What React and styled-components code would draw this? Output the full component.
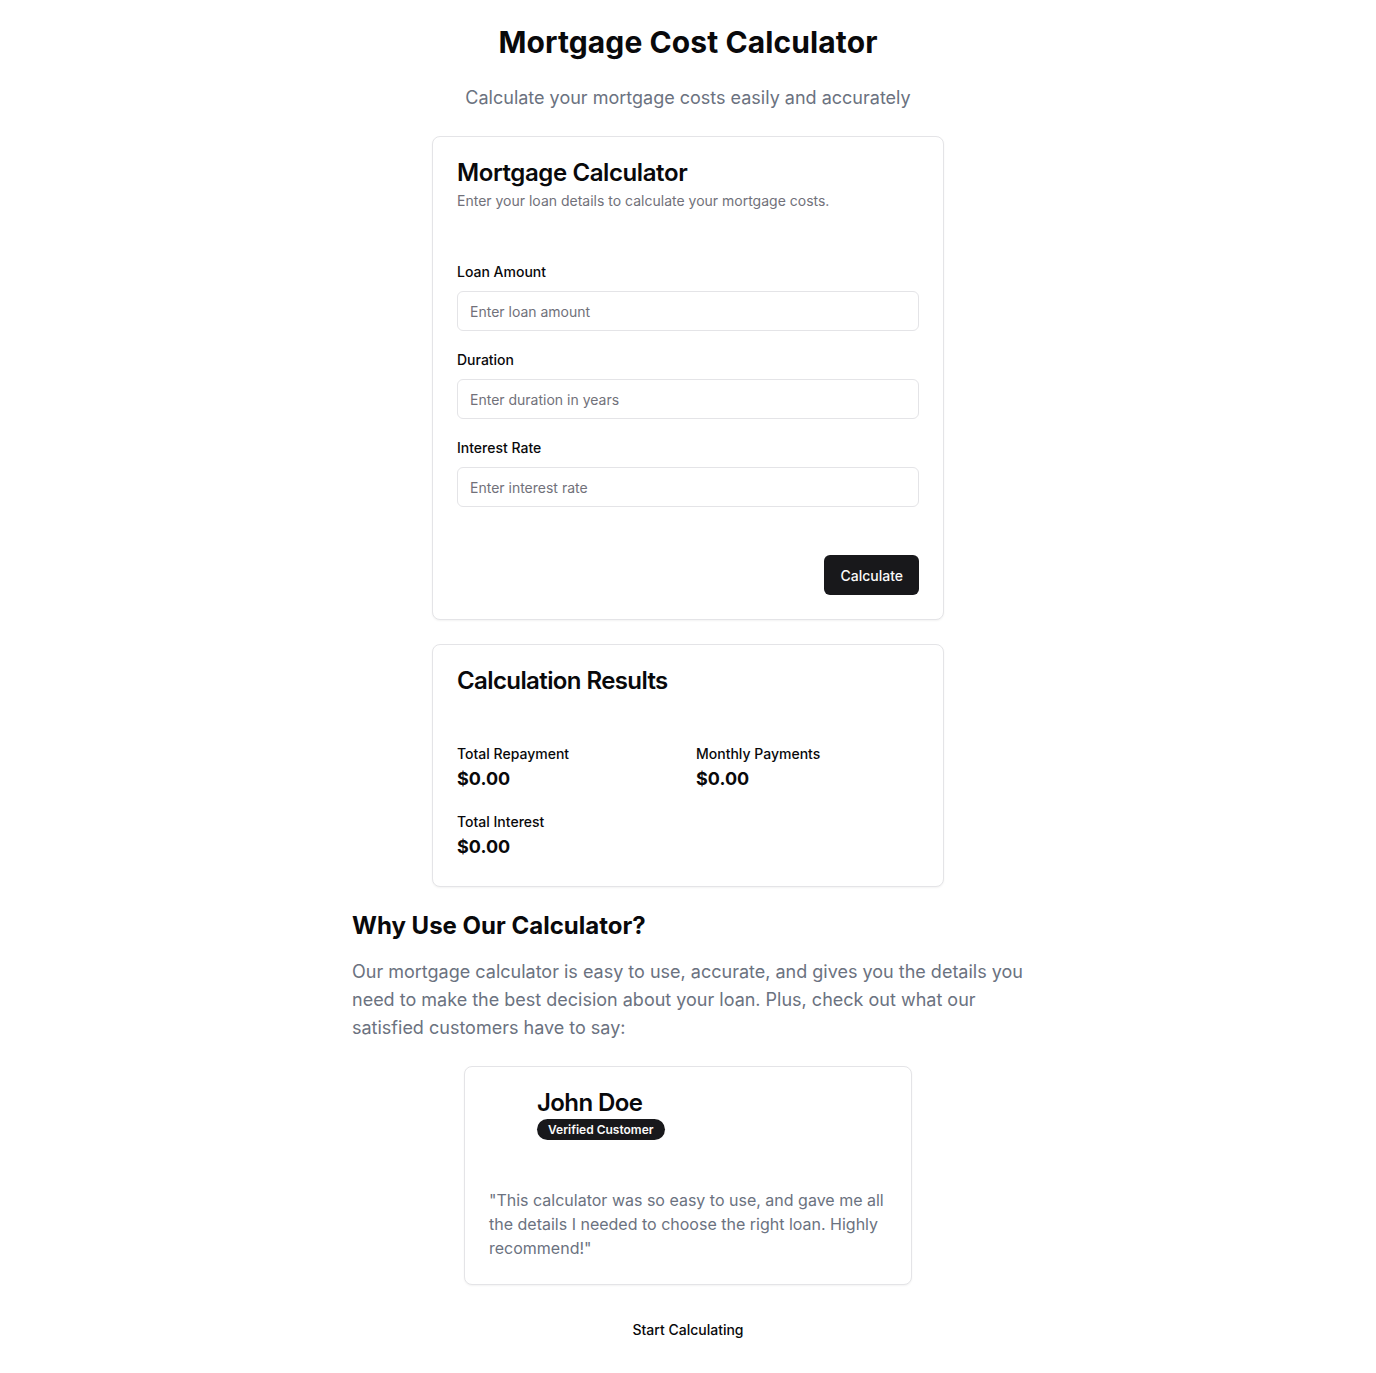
import React from 'react';
import styled, { createGlobalStyle } from 'styled-components';

const GlobalStyle = createGlobalStyle`
  * { box-sizing: border-box; }
  body {
    margin: 0;
    background: #ffffff;
    font-family: 'Inter', 'Liberation Sans', sans-serif;
    color: #09090b;
  }
`;

const Page = styled.div`
  display: flex;
  flex-direction: column;
  align-items: center;
  padding: 24px 16px 24px;
`;

const Title = styled.h1`
  margin: 0;
  font-size: 30px;
  line-height: 36px;
  font-weight: 700;
  letter-spacing: 0.1px;
`;

const Subtitle = styled.p`
  margin: 24px 0 24px;
  font-size: 18px;
  line-height: 28px;
  color: #6b7280;
`;

const Card = styled.div`
  width: ${(p) => p.$width}px;
  border: 1px solid #e4e4e7;
  border-radius: 8px;
  background: #fff;
  box-shadow: 0 1px 2px rgba(0, 0, 0, 0.05);
  margin-bottom: 24px;
`;

const CardHeader = styled.div`
  display: flex;
  flex-direction: column;
  gap: 6px;
  padding: 24px;
`;

const CardTitle = styled.h3`
  margin: 0;
  font-size: 24px;
  line-height: 24px;
  font-weight: 600;
  letter-spacing: ${(p) => p.$spacing || -0.4}px;
`;

const CardDescription = styled.p`
  margin: 0;
  font-size: 14px;
  line-height: 20px;
  color: #71717a;
`;

const CardContent = styled.div`
  padding: ${(p) => p.$top || 0}px 24px ${(p) => p.$bottom || 24}px;
`;

const Field = styled.div`
  display: flex;
  flex-direction: column;
  gap: 12px;
  margin-bottom: 22px;
  &:last-child { margin-bottom: 0; }
`;

const Label = styled.label`
  font-size: 14px;
  line-height: 14px;
  font-weight: 500;
`;

const Input = styled.input`
  height: 40px;
  width: 100%;
  border: 1px solid #e4e4e7;
  border-radius: 6px;
  padding: 0 12px;
  font-family: inherit;
  font-size: 14px;
  color: #09090b;
  background: #fff;
  outline: none;
  &::placeholder { color: #71717a; }
`;

const CardFooter = styled.div`
  display: flex;
  justify-content: flex-end;
  padding: 24px 24px 24px;
`;

const DarkButton = styled.button`
  height: 40px;
  padding: 0 16px;
  border: 0;
  border-radius: 6px;
  background: #18181b;
  color: #fafafa;
  font-family: inherit;
  font-size: 14px;
  font-weight: 500;
  cursor: pointer;
`;

const ResultGrid = styled.div`
  display: grid;
  grid-template-columns: 1fr 1fr;
  column-gap: 16px;
  row-gap: 19px;
`;

const ResultItem = styled.div`
  display: flex;
  flex-direction: column;
`;

const ResultLabel = styled.span`
  font-size: 14px;
  line-height: 20px;
  font-weight: 500;
`;

const ResultValue = styled.span`
  margin-top: 1px;
  font-size: 18px;
  line-height: 28px;
  font-weight: 700;
`;

const Section = styled.section`
  width: 672px;
  margin-top: -1px;
  display: flex;
  flex-direction: column;
  align-items: center;
`;

const SectionTitle = styled.h2`
  align-self: stretch;
  margin: 0 0 16px;
  font-size: 24px;
  line-height: 32px;
  font-weight: 700;
  letter-spacing: 0px;
`;

const Paragraph = styled.p`
  margin: 0 0 24px;
  font-size: 18px;
  line-height: 28px;
  color: #6b7280;
`;

const Person = styled.div`
  display: flex;
  gap: 8px;
  padding: 24px 24px 48px;
`;

const Avatar = styled.div`
  width: 40px;
  height: 40px;
  border-radius: 50%;
  flex-shrink: 0;
`;

const PersonInfo = styled.div`
  display: flex;
  flex-direction: column;
  align-items: flex-start;
  gap: 4px;
`;

const Name = styled.span`
  font-size: 24px;
  line-height: 24px;
  font-weight: 600;
  letter-spacing: -0.6px;
`;

const Badge = styled.span`
  display: inline-flex;
  align-items: center;
  height: 21px;
  padding: 0 11px;
  border-radius: 999px;
  background: #18181b;
  color: #fafafa;
  font-size: 12px;
  font-weight: 600;
`;

const Quote = styled.p`
  margin: 0;
  padding: 0 24px 24px;
  font-size: 16px;
  line-height: 24px;
  color: #6b7280;
`;

const LinkButton = styled.button`
  height: 40px;
  padding: 0 16px;
  border: 0;
  background: transparent;
  color: #09090b;
  font-family: inherit;
  font-size: 14px;
  font-weight: 500;
  cursor: pointer;
`;

const fields = [
  { label: 'Loan Amount', placeholder: 'Enter loan amount' },
  { label: 'Duration', placeholder: 'Enter duration in years' },
  { label: 'Interest Rate', placeholder: 'Enter interest rate' },
];

const results = [
  { label: 'Total Repayment', value: '$0.00' },
  { label: 'Monthly Payments', value: '$0.00' },
  { label: 'Total Interest', value: '$0.00' },
];

export default function App() {
  return (
    <>
      <GlobalStyle />
      <Page>
        <Title>Mortgage Cost Calculator</Title>
        <Subtitle>Calculate your mortgage costs easily and accurately</Subtitle>

        <Card $width={512}>
          <CardHeader>
            <CardTitle>Mortgage Calculator</CardTitle>
            <CardDescription>Enter your loan details to calculate your mortgage costs.</CardDescription>
          </CardHeader>
          <CardContent $top={30}>
            {fields.map((f) => (
              <Field key={f.label}>
                <Label>{f.label}</Label>
                <Input placeholder={f.placeholder} />
              </Field>
            ))}
          </CardContent>
          <CardFooter>
            <DarkButton>Calculate</DarkButton>
          </CardFooter>
        </Card>

        <Card $width={512}>
          <CardHeader>
            <CardTitle $spacing={-0.6}>Calculation Results</CardTitle>
          </CardHeader>
          <CardContent $top={27} $bottom={25}>
            <ResultGrid>
              {results.map((r) => (
                <ResultItem key={r.label}>
                  <ResultLabel>{r.label}</ResultLabel>
                  <ResultValue>{r.value}</ResultValue>
                </ResultItem>
              ))}
            </ResultGrid>
          </CardContent>
        </Card>

        <Section>
          <SectionTitle>Why Use Our Calculator?</SectionTitle>
          <Paragraph>
            Our mortgage calculator is easy to use, accurate, and gives you the details you need to make the best decision about your loan. Plus, check out what our satisfied customers have to say:
          </Paragraph>
          <Card $width={448}>
            <Person>
              <Avatar />
              <PersonInfo>
                <Name>John Doe</Name>
                <Badge>Verified Customer</Badge>
              </PersonInfo>
            </Person>
            <Quote>
              "This calculator was so easy to use, and gave me all the details I needed to choose the right loan. Highly recommend!"
            </Quote>
          </Card>
          <LinkButton>Start Calculating</LinkButton>
        </Section>
      </Page>
    </>
  );
}
